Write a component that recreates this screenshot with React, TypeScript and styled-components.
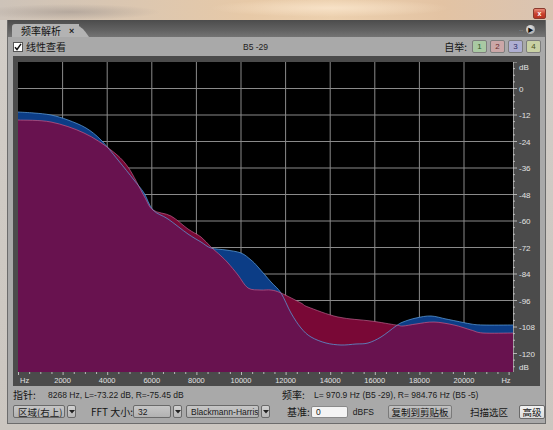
import React from 'react'
import styled, { createGlobalStyle } from 'styled-components'

const GlobalStyle = createGlobalStyle`
  html, body {
    margin: 0;
    padding: 0;
    background: #d4cfc9;
  }
  body {
    font-family: 'Liberation Sans', 'Noto Sans CJK SC', sans-serif;
  }
`

const CJK = `'Noto Sans CJK SC', 'Liberation Sans', sans-serif`

// plot area in page coordinates
const PX = 17
const PY = 62
const PW = 495
const PH = 310
const HZ_STEP = 44.6
const DB_TOP = 88.5
const DB_STEP = 26.5

type Pt = [number, number]

const BLUE: Pt[] = [
  [17, 112], [33, 113], [50, 115], [67, 120], [85, 128], [100, 140], [117, 160], [133, 180],
  [143, 193], [152, 210], [167, 219], [187, 234], [200, 242], [210, 248], [225, 250], [240, 253],
  [250, 260], [257, 267], [270, 282], [280, 293], [290, 313], [300, 328], [310, 337], [325, 343],
  [340, 345], [355, 344], [367, 343], [380, 337], [395, 326], [402, 322], [415, 318], [430, 316],
  [445, 319], [455, 321], [470, 324], [482, 325], [512, 325],
]

const RED: Pt[] = [
  [17, 120], [50, 122], [83, 133], [110, 150], [127, 167], [143, 196], [152, 210], [170, 216],
  [187, 229], [200, 237], [210, 247], [220, 256], [227, 263], [237, 275], [247, 288], [260, 290],
  [270, 290], [280, 293], [300, 303], [307, 307], [337, 317], [370, 321], [395, 325], [402, 326],
  [415, 324], [433, 322], [453, 325], [470, 330], [482, 333], [512, 333],
]

function smooth(pts: Pt[]) {
  let d = `M${pts[0][0]},${pts[0][1]}`
  for (let i = 0; i < pts.length - 1; i++) {
    const p0 = pts[i - 1] || pts[i]
    const p1 = pts[i]
    const p2 = pts[i + 1]
    const p3 = pts[i + 2] || p2
    const c1x = p1[0] + (p2[0] - p0[0]) / 6
    const c1y = p1[1] + (p2[1] - p0[1]) / 6
    const c2x = p2[0] - (p3[0] - p1[0]) / 6
    const c2y = p2[1] - (p3[1] - p1[1]) / 6
    d += ` C${c1x.toFixed(1)},${c1y.toFixed(1)} ${c2x.toFixed(1)},${c2y.toFixed(1)} ${p2[0]},${p2[1]}`
  }
  return d
}

const area = (line: string) => `${line} L${PX + PW},${PY + PH + 2} L${PX},${PY + PH + 2} Z`

const Window = styled.div`
  width: 553px;
  height: 430px;
  display: flex;
  flex-direction: column;
  overflow: hidden;
  background: linear-gradient(180deg, transparent 0, transparent 20px, #d2cdc7 20px, #cbc6c0 100%);
`

const TitleBar = styled.div`
  height: 20px;
  flex: none;
  display: flex;
  justify-content: flex-end;
  align-items: flex-start;
  padding: 8px 7px 0 0;
  box-sizing: border-box;
  background:
    radial-gradient(ellipse 90px 8px at 70px 12px, rgba(150, 140, 135, 0.5), transparent),
    radial-gradient(ellipse 120px 9px at 330px 8px, rgba(250, 230, 205, 0.8), transparent),
    linear-gradient(90deg, #cdc3b9 0%, #dcc7b0 25%, #e7c9a7 45%, #ecd0ae 60%, #e3c3a3 80%, #d9c4b3 100%);
`

const CloseButton = styled.div`
  width: 11px;
  height: 9px;
  border-radius: 2px;
  background: linear-gradient(180deg, #e88a78 0%, #c8402c 55%, #b83322 100%);
  border: 1px solid #8a3a2e;
  color: #fff;
  font-size: 7px;
  line-height: 9px;
  text-align: center;
  font-weight: bold;
`

const Panel = styled.div`
  flex: 1;
  margin: 0 7px 6px 7px;
  display: flex;
  flex-direction: column;
  background: #a9a9a9;
  border: 1px solid #6c6c6c;
  border-top: none;
`

const TabBar = styled.div`
  height: 17px;
  flex: none;
  display: flex;
  align-items: flex-end;
  justify-content: space-between;
  padding: 0 10px 0 4px;
  background: linear-gradient(180deg, #4c4c4c 0%, #626262 60%, #747474 100%);
`

const Tab = styled.div`
  width: 58px;
  height: 13px;
  position: relative;
  display: flex;
  align-items: center;
  gap: 8px;
  padding-left: 9px;
  background: #b3b3b3;
  border-radius: 3px 0 0 0;
  font-family: ${CJK};
  font-size: 10px;
  color: #111;
  white-space: nowrap;
  &::after {
    content: '';
    position: absolute;
    right: -10px;
    top: 0;
    width: 14px;
    height: 13px;
    background: #b3b3b3;
    border-radius: 0 8px 0 0;
    transform: skewX(35deg);
    transform-origin: bottom left;
  }
`

const TabClose = styled.span`
  font-family: 'Liberation Sans', sans-serif;
  font-size: 9px;
  font-weight: bold;
  color: #222;
  position: relative;
  z-index: 1;
`

const PanelMenu = styled.div`
  display: flex;
  align-items: center;
  gap: 3px;
  margin-bottom: 3px;
  color: #bbb;
  font-size: 6px;
`

const MenuDot = styled.div`
  width: 9px;
  height: 9px;
  border-radius: 50%;
  background: radial-gradient(circle at 40% 35%, #e8e8e8, #9a9a9a);
  display: flex;
  align-items: center;
  justify-content: center;
  color: #111;
  font-size: 6px;
`

const Toolbar = styled.div`
  height: 19px;
  flex: none;
  display: flex;
  align-items: center;
  padding: 0 4px 0 5px;
  box-sizing: border-box;
`

const CheckLabel = styled.label`
  display: flex;
  align-items: center;
  gap: 3px;
  font-family: ${CJK};
  font-size: 10px;
  color: #151515;
  width: 222px;
  white-space: nowrap;
`

const CheckBox = styled.span`
  width: 8px;
  height: 8px;
  background: #fff;
  border: 1px solid #555;
  display: flex;
  align-items: center;
  justify-content: center;
`

const Center = styled.div`
  flex: 1;
  font-size: 8.5px;
  color: #222;
  padding-left: 8px;
`

const PresetLabel = styled.span`
  font-family: ${CJK};
  font-size: 10px;
  color: #151515;
  margin-right: 2px;
  white-space: nowrap;
`

const Preset = styled.div<{ $bg: string; $fg: string }>`
  width: 13px;
  height: 11px;
  margin-left: 3px;
  border: 1px solid #7d7d7d;
  border-radius: 2px;
  background: ${({ $bg }) => $bg};
  color: ${({ $fg }) => $fg};
  font-size: 8px;
  line-height: 11px;
  text-align: center;
`

const PlotFrame = styled.div`
  height: 330px;
  flex: none;
  margin: 0 5px;
  box-sizing: border-box;
  padding: 6px 0 0 5px;
  background: #4b4b4b;
  display: flex;
  flex-direction: column;
`

const PlotRow = styled.div`
  display: flex;
  height: ${PH}px;
`

const Svg = styled.svg`
  display: block;
  flex: none;
`

const InfoRow = styled.div`
  height: 17px;
  flex: none;
  display: flex;
  align-items: center;
  padding-left: 5px;
  font-size: 8.5px;
  color: #1a1a1a;
  white-space: nowrap;
`

const InfoGroup = styled.div<{ $w?: number }>`
  display: flex;
  align-items: center;
  width: ${({ $w }) => ($w ? `${$w}px` : 'auto')};
`

const Label = styled.span<{ $w?: number }>`
  font-family: ${CJK};
  font-size: 10px;
  color: #151515;
  width: ${({ $w }) => ($w ? `${$w}px` : 'auto')};
  flex: none;
  white-space: nowrap;
`

const ControlsRow = styled.div`
  height: 17px;
  flex: none;
  display: flex;
  align-items: center;
  padding-left: 5px;
  font-size: 8.5px;
  color: #1a1a1a;
  white-space: nowrap;
`

const SelectBox = styled.div<{ $w: number; $cjk?: boolean }>`
  width: ${({ $w }) => $w}px;
  height: 11px;
  box-sizing: content-box;
  border: 1px solid #6a6a6a;
  border-radius: 2px;
  background: linear-gradient(180deg, #c6c6c6, #b2b2b2);
  display: flex;
  align-items: center;
  padding-left: 4px;
  font-family: ${({ $cjk }) => ($cjk ? CJK : `'Liberation Sans', sans-serif`)};
  font-size: ${({ $cjk }) => ($cjk ? 9.5 : 8.5)}px;
  color: #1a1a1a;
  white-space: nowrap;
  overflow: hidden;
`

const SelectArrow = styled.div`
  width: 7px;
  height: 11px;
  margin-left: 2px;
  border: 1px solid #6a6a6a;
  border-radius: 2px;
  background: linear-gradient(180deg, #d2d2d2, #b6b6b6);
  display: flex;
  align-items: center;
  justify-content: center;
`

const Select = styled.div<{ $gap: number }>`
  display: flex;
  align-items: center;
  margin-right: ${({ $gap }) => $gap}px;
`

const Input = styled.div`
  width: 32px;
  height: 10px;
  margin: 0 5px 0 0;
  padding-left: 4px;
  border: 1px solid #8a8a8a;
  border-radius: 2px;
  background: #f4f4f4;
  font-size: 8.5px;
  line-height: 10px;
`

const Button = styled.div<{ $variant: 'gray' | 'flat' | 'light'; $w: number }>`
  width: ${({ $w }) => $w}px;
  height: 12px;
  flex: none;
  margin-left: ${({ $variant }) => ($variant === 'gray' ? 14 : $variant === 'flat' ? 16 : 9)}px;
  display: flex;
  align-items: center;
  justify-content: center;
  font-family: ${CJK};
  font-size: 9.5px;
  color: #151515;
  white-space: nowrap;
  border-radius: 2px;
  border: 1px solid
    ${({ $variant }) => ($variant === 'gray' ? '#7a7a7a' : $variant === 'light' ? '#6a6a6a' : 'transparent')};
  background: ${({ $variant }) =>
    $variant === 'gray'
      ? 'linear-gradient(180deg, #c2c2c2, #a8a8a8)'
      : $variant === 'light'
      ? 'linear-gradient(180deg, #f2f2f2, #dcdcdc)'
      : 'transparent'};
`

function Arrow() {
  return (
    <svg width="6" height="5" viewBox="0 0 6 5">
      <path d="M0 1 L6 1 L3 4.5 Z" fill="#222" />
    </svg>
  )
}

function Dropdown({ text, w, gap, cjk }: { text: string; w: number; gap: number; cjk?: boolean }) {
  return (
    <Select $gap={gap}>
      <SelectBox $w={w} $cjk={cjk}>
        {text}
      </SelectBox>
      <SelectArrow>
        <Arrow />
      </SelectArrow>
    </Select>
  )
}

function Spectrum() {
  const blueLine = smooth(BLUE)
  const redLine = smooth(RED)
  const vx = Array.from({ length: 10 }, (_, i) => PX + (i + 1) * HZ_STEP)
  const hy = Array.from({ length: 11 }, (_, i) => DB_TOP + i * DB_STEP)
  return (
    <Svg width={PW} height={PH} viewBox={`${PX} ${PY} ${PW} ${PH}`}>
      <defs>
        <clipPath id="blueArea">
          <path d={area(blueLine)} />
        </clipPath>
      </defs>
      <rect x={PX} y={PY} width={PW} height={PH} fill="#000" />
      {vx.map((x) => (
        <line key={x} x1={x} x2={x} y1={PY} y2={PY + PH} stroke="#8a8a8a" strokeWidth="1" />
      ))}
      {hy.map((y) => (
        <line key={y} x1={PX} x2={PX + PW} y1={y} y2={y} stroke="#8a8a8a" strokeWidth="1" />
      ))}
      <path d={area(blueLine)} fill="#0c3d86" />
      <path d={area(redLine)} fill="#790836" />
      <path d={area(redLine)} fill="#68124f" clipPath="url(#blueArea)" />
      <path d={blueLine} fill="none" stroke="#5a9ad8" strokeWidth="0.9" opacity="0.85" />
      <path d={redLine} fill="none" stroke="#c46a98" strokeWidth="0.9" opacity="0.7" />
    </Svg>
  )
}

const DB_LABELS = ['0', '-12', '-24', '-36', '-48', '-60', '-72', '-84', '-96', '-108', '-120']

function DbAxis() {
  const ticks = Array.from({ length: 47 }, (_, i) => i)
  return (
    <Svg width={28} height={PH} viewBox={`0 0 28 ${PH}`}>
      <line x1="0.5" x2="0.5" y1="0" y2={PH} stroke="#9a9a9a" />
      {ticks.map((i) => {
        const y = DB_TOP - PY - DB_STEP + i * (DB_STEP / 4)
        const major = i % 4 === 0
        return <line key={i} x1="0" x2={major ? 4 : 2} y1={y} y2={y} stroke="#d0d0d0" strokeWidth="0.8" />
      })}
      <text x="6" y="6" fontSize="8" fill="#e2e2e2" fontFamily="Liberation Sans" dominantBaseline="middle">
        dB
      </text>
      {DB_LABELS.map((t, i) => (
        <text
          key={t}
          x="6"
          y={DB_TOP - PY + i * DB_STEP + 1}
          fontSize="8"
          fill="#e2e2e2"
          fontFamily="Liberation Sans"
          dominantBaseline="middle"
        >
          {t}
        </text>
      ))}
      <text x="6" y={PH - 4} fontSize="8" fill="#e2e2e2" fontFamily="Liberation Sans" dominantBaseline="middle">
        dB
      </text>
    </Svg>
  )
}

const HZ_LABELS = ['2000', '4000', '6000', '8000', '10000', '12000', '14000', '16000', '18000', '20000']

function HzAxis() {
  const ticks = Array.from({ length: 45 }, (_, i) => i)
  return (
    <Svg width={523} height={14} viewBox="0 0 523 14">
      {ticks.map((i) => {
        const x = i * (HZ_STEP / 4) + 0.5
        const major = i % 4 === 0
        return <line key={i} x1={x} x2={x} y1="0" y2={major ? 3 : 2} stroke="#d6d6d6" strokeWidth="0.8" />
      })}
      <text x="2" y="10.5" fontSize="7.5" fill="#e2e2e2" fontFamily="Liberation Sans">
        Hz
      </text>
      {HZ_LABELS.map((t, i) => (
        <text
          key={t}
          x={(i + 1) * HZ_STEP}
          y="10.5"
          fontSize="7.5"
          fill="#e2e2e2"
          fontFamily="Liberation Sans"
          textAnchor="middle"
        >
          {t}
        </text>
      ))}
      <text x="488" y="10.5" fontSize="7.5" fill="#e2e2e2" fontFamily="Liberation Sans" textAnchor="middle">
        Hz
      </text>
    </Svg>
  )
}

export default function App() {
  return (
    <>
      <GlobalStyle />
      <Window>
        <TitleBar>
          <CloseButton>x</CloseButton>
        </TitleBar>
        <Panel>
          <TabBar>
            <Tab>
              <span>频率解析</span>
              <TabClose>×</TabClose>
            </Tab>
            <PanelMenu>
              <span>··</span>
              <MenuDot>▶</MenuDot>
            </PanelMenu>
          </TabBar>
          <Toolbar>
            <CheckLabel>
              <CheckBox>
                <svg width="8" height="8" viewBox="0 0 8 8">
                  <path d="M1 4.2 L3 6.5 L7 0.8" fill="none" stroke="#111" strokeWidth="1.4" />
                </svg>
              </CheckBox>
              线性查看
            </CheckLabel>
            <Center>B5 -29</Center>
            <PresetLabel>自举:</PresetLabel>
            <Preset $bg="#a9c9a3" $fg="#2f5a2a">1</Preset>
            <Preset $bg="#cba7a7" $fg="#6a2a2a">2</Preset>
            <Preset $bg="#aeaed2" $fg="#2e2e6a">3</Preset>
            <Preset $bg="#c9d1a4" $fg="#4a5222">4</Preset>
          </Toolbar>
          <PlotFrame>
            <PlotRow>
              <Spectrum />
              <DbAxis />
            </PlotRow>
            <HzAxis />
          </PlotFrame>
          <InfoRow>
            <InfoGroup $w={269}>
              <Label $w={35}>指针:</Label>
              8268 Hz, L=-73.22 dB, R=-75.45 dB
            </InfoGroup>
            <InfoGroup>
              <Label $w={32}>频率:</Label>
              L= 970.9 Hz (B5 -29), R= 984.76 Hz (B5 -5)
            </InfoGroup>
          </InfoRow>
          <ControlsRow>
            <Dropdown text="区域(右上)" w={46} gap={15} cjk />
            <Label $w={42}>FFT 大小:</Label>
            <Dropdown text="32" w={32} gap={4} />
            <Dropdown text="Blackmann-Harris" w={67} gap={17} />
            <Label $w={24}>基准:</Label>
            <Input>0</Input>
            <span>dBFS</span>
            <Button $variant="gray" $w={62}>
              复制到剪贴板
            </Button>
            <Button $variant="flat" $w={40}>
              扫描选区
            </Button>
            <Button $variant="light" $w={24}>
              高级
            </Button>
          </ControlsRow>
        </Panel>
      </Window>
    </>
  )
}
